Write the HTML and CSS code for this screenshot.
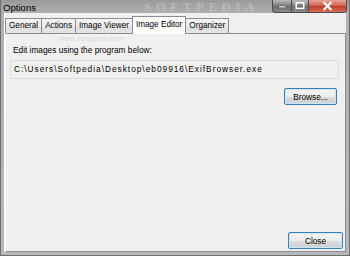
FILE: index.html
```html
<!DOCTYPE html>
<html>
<head>
<meta charset="utf-8">
<link rel="stylesheet" href="styles.css">
</head>
<body>
<div class="window">
  <div class="titlebar">
    <span class="title">Options</span>
    <span class="watermark">SOFTPEDIA</span>
    <div class="caption">
      <div class="cbtn min"><svg width="20" height="12" viewBox="0 0 20 12"><rect x="6" y="6" width="8" height="2" fill="#fff" stroke="#333" stroke-width="0.5"/></svg></div>
      <div class="cbtn max"><svg width="17" height="12" viewBox="0 0 17 12"><rect x="4.5" y="2.5" width="8" height="6" fill="none" stroke="#fff" stroke-width="1.6"/></svg></div>
      <div class="cbtn close"><svg width="38" height="12" viewBox="0 0 38 12"><path d="M15 2 L23 10 M23 2 L15 10" stroke="#fff" stroke-width="2.2"/></svg></div>
    </div>
  </div>
  <div class="client">
    <div class="tabs">
      <div class="tab">General</div>
      <div class="tab">Actions</div>
      <div class="tab">Image Viewer</div>
      <div class="tab active">Image Editor</div>
      <div class="tab">Organizer</div>
    </div>
    <div class="panel">
      <span class="wm-url">www.softpedia.com</span>
      <div class="label">Edit images using the program below:</div>
      <div class="textbox">C:\Users\Softpedia\Desktop\eb09916\ExifBrowser.exe</div>
      <div class="row browse-row"><button class="btn">Browse...</button></div>
      <div class="spacer"></div>
      <div class="row bottom"><button class="btn close-btn">Close</button></div>
    </div>
  </div>
</div>
</body>
</html>
```

FILE: styles.css
```css
* { box-sizing: border-box; }
html, body { margin: 0; padding: 0; }
body { width: 350px; height: 256px; overflow: hidden; background: #e8e8e8; font-family: "Liberation Sans", Arial, sans-serif; }
.window {
  width: 350px; height: 256px;
  background: linear-gradient(to bottom, #9a9a9a 0, #b0b0b0 13px, #b8b8b8 100%);
  display: flex; flex-direction: column;
  padding: 0 3px 3px 3px;
  position: relative;
  border: 1px solid #6e6e6e;
  border-top: none;
}
.titlebar {
  height: 13px; display: flex; align-items: flex-start; position: relative;
}
.title { font-size: 9.6px; color: #000; padding: 2px 0 0 0; margin-left: -1px; position: relative; z-index: 1; }
.watermark {
  position: absolute; left: 140px; top: 0; height: 13px; line-height: 13px;
  font-family: "Liberation Serif", serif; font-weight: bold; font-size: 13px; letter-spacing: 4.5px;
  color: rgba(225,225,225,0.35); white-space: nowrap;
}
.caption { margin-left: auto; display: flex; margin-right: -1px; height: 13px; z-index: 1; }
.cbtn { height: 13px; border: 1px solid #4a4a4a; border-top: none; display: flex; align-items: center; justify-content: center; }
.cbtn.min { width: 20px; border-radius: 0 0 0 4px; background: linear-gradient(#b8b8b8, #7c7c7c 50%, #6a6a6a 51%, #8a8a8a); }
.cbtn.max { width: 17px; border-left: none; background: linear-gradient(#b8b8b8, #7c7c7c 50%, #6a6a6a 51%, #8a8a8a); }
.cbtn.close { width: 38px; border-left: none; border-radius: 0 0 4px 0; background: linear-gradient(#e8a496, #d0604c 50%, #c0392a 51%, #d8705c); }
.client {
  flex: 1; background: #f0f0f0; display: flex; flex-direction: column;
  padding-top: 3px;
  border-left: 1px solid #fff;
}
.tabs { display: flex; align-items: flex-end; height: 18px; padding-left: 0; }
.tab {
  font-size: 8.2px; color: #000; height: 16px; line-height: 14px;
  padding: 0 3px; border: 1px solid #898c95; border-bottom: none; border-right: none;
  background: linear-gradient(#f3f3f3, #ebebeb 50%, #dedede 51%, #e5e5e5);
  white-space: nowrap;
}
.tab:nth-child(5) { border-right: 1px solid #898c95; }
.tab.active { height: 18px; background: #fff; line-height: 15px; border-right: 1px solid #898c95; margin-right: -1px; position: relative; z-index: 1; }
.panel {
  flex: 1; border: 1px solid #898c95; border-left-color: #fff; margin-top: -1px;
  background: #f0f0f0; display: flex; flex-direction: column;
  padding: 11px 2px 2px 4px; position: relative;
}
.wm-url { position: absolute; left: 53px; top: 1px; font-size: 7px; color: #d8d8d8; letter-spacing: 0.3px; }
.label { font-size: 8.3px; margin-left: 3px; height: 13px; }
.textbox {
  margin-top: 2px; height: 19px; width: 329px;
  border: 1px solid #dcdcdc; background: #f0f0f0;
  font-size: 8.3px; line-height: 17px; padding-left: 3px; white-space: nowrap; letter-spacing: 1px;
}
.row { display: flex; justify-content: flex-end; }
.btn {
  font-family: "Liberation Sans", Arial, sans-serif; font-size: 8.3px; color: #000;
  height: 17px; width: 53px; padding: 0;
  border: 1px solid #3c7fb1; border-radius: 2px;
  background: linear-gradient(#f4f4f4, #ececec 50%, #dddddd 51%, #cfcfcf);
  box-shadow: inset 0 0 0 1px #cde6f7;
}
.browse-row { margin-top: 9px; padding-right: 6px; }
.spacer { flex: 1; }
.close-btn { width: 55px; }
```
